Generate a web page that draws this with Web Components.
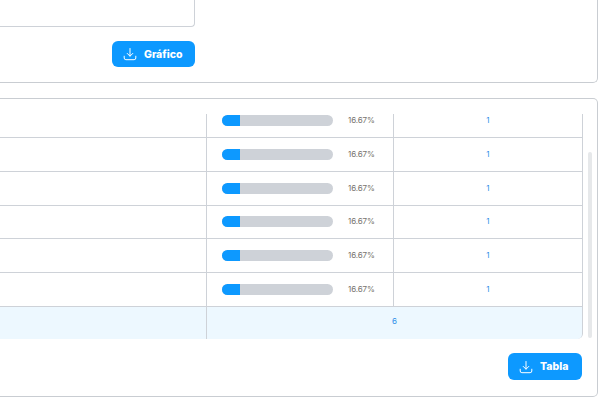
<!DOCTYPE html>
<html lang="es">
<head>
<meta charset="utf-8">
<title>Reporte</title>
<style>
html,body{margin:0;padding:0;background:#fff;height:407px;overflow:hidden}
body{font-family:Inter,"Liberation Sans",sans-serif}
</style>
</head>
<body>
<x-page>
  <x-card style="height:83px;border-top:0;border-top-right-radius:0">
    <x-chart-panel>
      <x-button label="Gráfico" style="width:83px;height:26px"></x-button>
    </x-chart-panel>
  </x-card>
  <x-card style="height:299px">
    <x-table-panel>
      <x-table>
        <x-row value="1" pct="16.67"></x-row>
        <x-row value="1" pct="16.67"></x-row>
        <x-row value="1" pct="16.67"></x-row>
        <x-row value="1" pct="16.67"></x-row>
        <x-row value="1" pct="16.67"></x-row>
        <x-row value="1" pct="16.67"></x-row>
        <x-total value="6"></x-total>
      </x-table>
      <x-button label="Tabla" style="width:74px;height:27px" slot="actions"></x-button>
    </x-table-panel>
  </x-card>
</x-page>
<script>
function def(name, css, html, setup){
  customElements.define(name, class extends HTMLElement{
    connectedCallback(){
      if(this.shadowRoot) return;
      const r=this.attachShadow({mode:'open'});
      r.innerHTML='<style>'+css+'</style>'+html;
      if(setup) setup(this,r);
    }
  });
}
const LINE='#ced2d8';
def('x-page',
 ':host{display:flex;flex-direction:column;gap:15px;height:407px;padding-right:7px;box-sizing:border-box}',
 '<slot></slot>');
def('x-card',
 ':host{display:block;box-sizing:border-box;background:#fff;border:1px solid #c9cdd2;border-left:0;border-radius:0 5px 5px 0}',
 '<slot></slot>');
def('x-chart-panel',
 ':host{display:flex;flex-direction:column;align-items:flex-end;width:195px;gap:14px}'+
 '.box{width:100%;height:27px;box-sizing:border-box;border:1px solid '+LINE+';border-top:0;border-left:0;border-radius:0 0 4px 0}',
 '<div class="box"></div><slot></slot>');
def('x-table-panel',
 ':host{display:flex;flex-direction:column;height:100%;padding:15px 0 0 0;box-sizing:border-box}'+
 '.top{display:flex;height:226px}'+
 '.gutter{width:14px;display:flex;justify-content:flex-end;padding-right:5px;box-sizing:border-box}'+
 '.thumb{width:4px;margin-top:38px;height:186px;background:#e6e8ea;border-radius:2px;margin-left:5px}'+
 '.bottom{display:flex;justify-content:flex-end;padding:13px 15px 0 0}',
 '<div class="top"><slot></slot><div class="gutter"><div class="thumb"></div></div></div>'+
 '<div class="bottom"><slot name="actions"></slot></div>');
def('x-table',
 ':host{display:block;width:583px;height:225px;overflow:hidden;flex:none;border-radius:0 0 5px 0}'+
 '.inner{margin-top:-9.8px}',
 '<div class="inner"><slot></slot></div>');
def('x-row',
 ':host{display:grid;grid-template-columns:207px 187px 189px;height:33.8px;box-sizing:border-box;border-bottom:1px solid '+LINE+'}'+
 '.c{box-sizing:border-box;border-right:1px solid '+LINE+';display:flex;align-items:center;min-width:0}'+
 '.bar{width:111px;height:11px;border-radius:5.5px;background:#ced2d8;overflow:hidden;margin-left:15px;flex:none}'+
 '.fill{height:100%;background:#0d99ff}'+
 '.pct{margin-left:15px;padding-bottom:1.4px;font:400 8px Inter,"Liberation Sans",sans-serif;color:#77736e;letter-spacing:-.1px}'+
 '.v{width:100%;padding-bottom:1.4px;text-align:center;font:400 8px Inter,"Liberation Sans",sans-serif;color:#2f8fe8}',
 '<div class="c"></div><div class="c"><div class="bar"><div class="fill"></div></div><span class="pct"></span></div><div class="c"><span class="v"></span></div>',
 (h,r)=>{
   const p=h.getAttribute('pct');
   r.querySelector('.fill').style.width=Math.floor(111*parseFloat(p)/100)+'px';
   r.querySelector('.pct').textContent=p+'%';
   r.querySelector('.v').textContent=h.getAttribute('value');
 });
def('x-total',
 ':host{display:grid;grid-template-columns:207px 375px;height:32px;background:#edf8ff;border-radius:0 0 5px 0;box-sizing:border-box;border-right:1px solid '+LINE+'}'+
 '.c{display:flex;align-items:center;justify-content:center;padding-bottom:3px;box-sizing:border-box;font:400 8px Inter,"Liberation Sans",sans-serif;color:#2f8fe8}'+
 '.lead{border-right:1px solid '+LINE+'}',
 '<div class="c lead"></div><div class="c"><span></span></div>',
 (h,r)=>{ r.querySelector('span').textContent=h.getAttribute('value'); });
def('x-button',
 ':host{display:flex;align-items:center;box-sizing:border-box;background:#0d99ff;border-radius:6px;color:#fff;font:800 10.5px Inter,"Liberation Sans",sans-serif;padding-left:11px;gap:7px;flex:none}'+
 'svg{width:14px;height:14px;flex:none}',
 '<svg viewBox="0 0 14 14" fill="none" stroke="#fff" stroke-width="1" stroke-linecap="round" stroke-linejoin="round"><path d="M7 1.5v7.5M4.2 6.4L7 9.2l2.8-2.8"/><path d="M1.2 9.2v1.8a1.7 1.7 0 0 0 1.7 1.7h8.2a1.7 1.7 0 0 0 1.7-1.7V9.2"/></svg><span></span>',
 (h,r)=>{ r.querySelector('span').textContent=h.getAttribute('label'); });
</script>
</body>
</html>
